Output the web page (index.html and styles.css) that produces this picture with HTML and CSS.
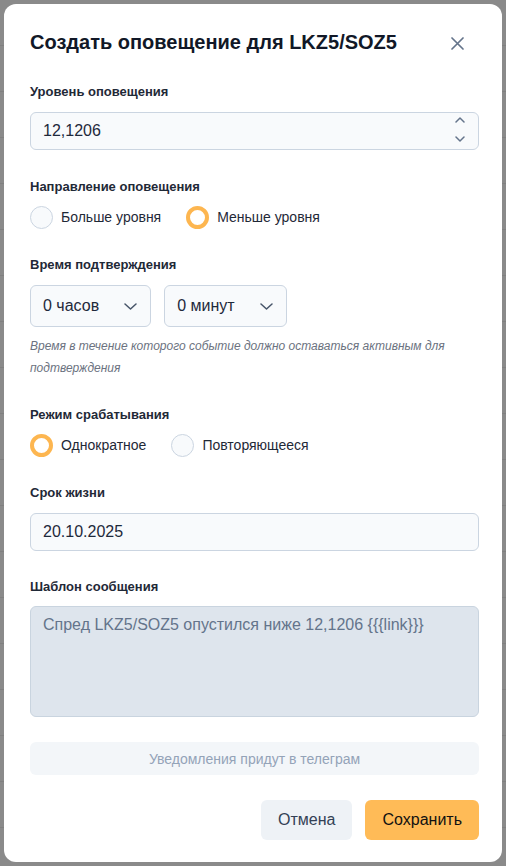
FILE: index.html
```html
<!DOCTYPE html>
<html lang="ru">
<head>
<meta charset="utf-8">
<title>Создать оповещение</title>
<link rel="stylesheet" href="styles.css">
</head>
<body>
<div class="backdrop">
  <div class="modal">
    <div class="header">
      <h2 class="title">Создать оповещение для LKZ5/SOZ5</h2>
      <svg class="close" width="13" height="13" viewBox="0 0 13 13"><path d="M1 1 L12 12 M12 1 L1 12" stroke="#64748b" stroke-width="1.7" stroke-linecap="round" fill="none"/></svg>
    </div>

    <div class="field field-first">
      <div class="label">Уровень оповещения</div>
      <div class="input">
        <span>12,1206</span>
        <svg class="spinner" width="10" height="25" viewBox="0 0 10 25"><path d="M1 5 L5 1 L9 5 M1 20 L5 24 L9 20" stroke="#64748b" stroke-width="1.5" stroke-linecap="round" stroke-linejoin="round" fill="none"/></svg>
      </div>
    </div>

    <div class="field field-second">
      <div class="label label-radio">Направление оповещения</div>
      <div class="radios">
        <div class="radio"><span class="circle"></span><span>Больше уровня</span></div>
        <div class="radio"><span class="circle checked"></span><span>Меньше уровня</span></div>
      </div>
    </div>

    <div class="field">
      <div class="label">Время подтверждения</div>
      <div class="selects">
        <div class="select"><span>0 часов</span><svg width="13" height="7" viewBox="0 0 13 7"><path d="M1 1 L6.5 6 L12 1" stroke="#475569" stroke-width="1.5" stroke-linecap="round" stroke-linejoin="round" fill="none"/></svg></div>
        <div class="select"><span>0 минут</span><svg width="13" height="7" viewBox="0 0 13 7"><path d="M1 1 L6.5 6 L12 1" stroke="#475569" stroke-width="1.5" stroke-linecap="round" stroke-linejoin="round" fill="none"/></svg></div>
      </div>
      <p class="help">Время в течение которого событие должно оставаться активным для подтверждения</p>
    </div>

    <div class="field">
      <div class="label label-radio">Режим срабатывания</div>
      <div class="radios">
        <div class="radio"><span class="circle checked"></span><span>Однократное</span></div>
        <div class="radio"><span class="circle"></span><span>Повторяющееся</span></div>
      </div>
    </div>

    <div class="field">
      <div class="label">Срок жизни</div>
      <div class="input"><span>20.10.2025</span></div>
    </div>

    <div class="field">
      <div class="label label-area">Шаблон сообщения</div>
      <div class="textarea">Спред LKZ5/SOZ5 опустился ниже 12,1206 {{{link}}}</div>
    </div>

    <div class="info">Уведомления придут в телеграм</div>

    <div class="actions">
      <button class="btn btn-cancel">Отмена</button>
      <button class="btn btn-save">Сохранить</button>
    </div>
  </div>
</div>
</body>
</html>
```

FILE: styles.css
```css
* { box-sizing: border-box; }

body {
  margin: 0;
  font-family: "Liberation Sans", Arial, Helvetica, sans-serif;
}

.backdrop {
  width: 506px;
  height: 866px;
  padding: 4px;
  background-color: #8a8a8a;
  background-image: repeating-linear-gradient(to bottom, transparent 0 45px, rgba(0,0,0,0.07) 45px 46px);
}

.modal {
  width: 498px;
  height: 858px;
  background: #ffffff;
  border-radius: 12px;
  padding: 26px 23px 22px 26px;
}

.header {
  display: flex;
  align-items: center;
  justify-content: space-between;
  height: 24px;
}

.title {
  margin: 0;
  font-size: 20px;
  line-height: 24px;
  font-weight: 700;
  color: #111827;
}

.close {
  margin-right: 15px;
  margin-top: 2px;
}

.field { margin-top: 28px; }
.field-first { margin-top: 30px; }
.field-second { margin-top: 29px; }

.label {
  font-size: 13px;
  line-height: 16px;
  font-weight: 700;
  color: #1f2937;
  margin-bottom: 12px;
}

.label-radio { margin-bottom: 10px; }
.label-area { margin-bottom: 11px; }

.input {
  display: flex;
  align-items: center;
  justify-content: space-between;
  height: 38px;
  padding: 0 13px 0 12px;
  background: #f8fafc;
  border: 1px solid #cbd5e1;
  border-radius: 6px;
  font-size: 16px;
  color: #1e293b;
}

.spinner { margin-bottom: 4px; }

.radios {
  display: flex;
  align-items: center;
  gap: 25px;
  height: 24px;
}

.radio {
  display: flex;
  align-items: center;
  gap: 8px;
  font-size: 14px;
  color: #1f2937;
}

.circle {
  width: 23px;
  height: 23px;
  border-radius: 50%;
  border: 1px solid #cbd5e1;
  background: #f8fafc;
}

.circle.checked {
  border: 4px solid #fdb650;
  background: #ffffff;
}

.selects {
  display: flex;
  gap: 13px;
}

.select {
  display: flex;
  align-items: center;
  gap: 25px;
  height: 42px;
  padding: 0 13px 0 12px;
  background: #f8fafc;
  border: 1px solid #cbd5e1;
  border-radius: 6px;
  font-size: 16px;
  color: #1e293b;
}

.help {
  margin: 8px 0 0;
  font-size: 12px;
  line-height: 22px;
  font-style: italic;
  color: #6b7280;
}

.textarea {
  height: 111px;
  padding: 6px 12px;
  background: #dee5ed;
  border: 1px solid #c9d4df;
  border-radius: 6px;
  font-size: 16px;
  line-height: 24px;
  color: #64748b;
}

.info {
  margin-top: 25px;
  height: 33px;
  display: flex;
  align-items: center;
  justify-content: center;
  background: #f3f6f9;
  border-radius: 6px;
  font-size: 14px;
  color: #94a3b8;
}

.actions {
  margin-top: 25px;
  display: flex;
  justify-content: flex-end;
  gap: 13px;
}

.btn {
  height: 40px;
  padding: 0 17px;
  border: none;
  border-radius: 6px;
  font-family: inherit;
  font-size: 16px;
}

.btn-cancel {
  background: #eef2f6;
  color: #334155;
}

.btn-save {
  background: #ffbb57;
  color: #111111;
}
```
